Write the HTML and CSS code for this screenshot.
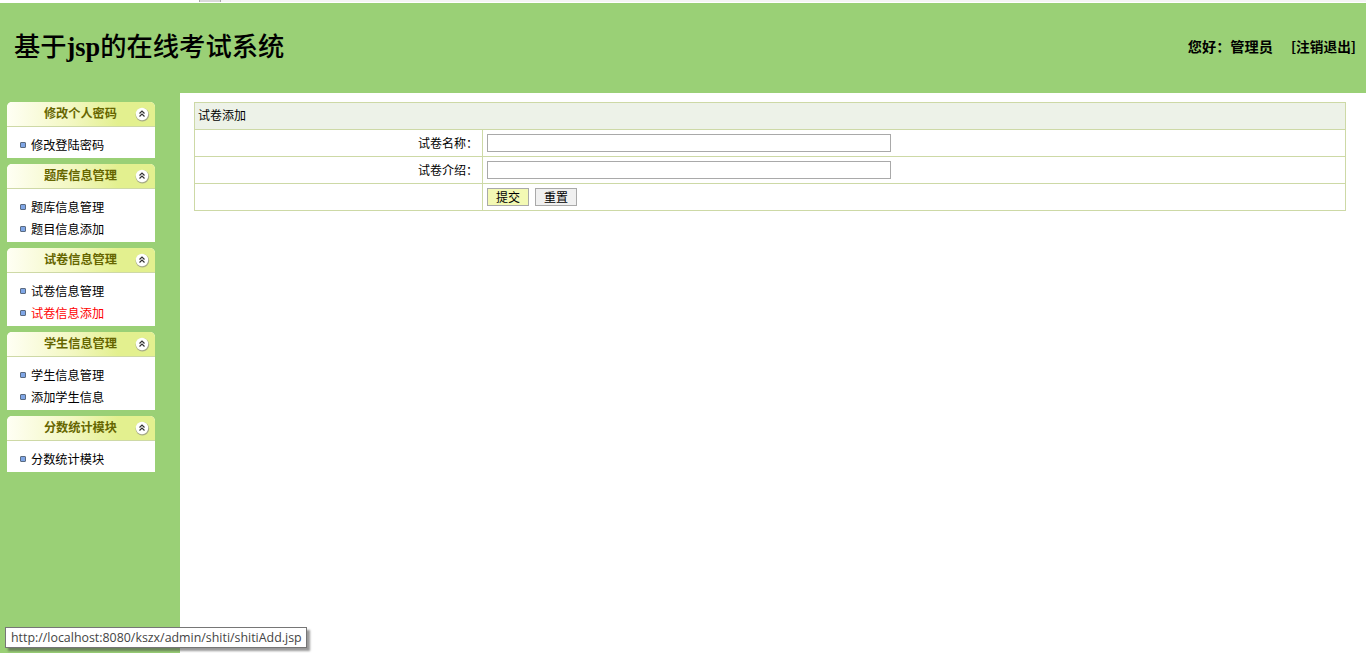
FILE: index.html
```html
<!DOCTYPE html>
<html lang="zh-CN">
<head>
<meta charset="utf-8">
<title>基于jsp的在线考试系统</title>
<link rel="stylesheet" href="styles.css">
</head>
<body>
<div class="strip"><span class="strip-a"></span><span class="strip-b"></span><span class="strip-c"></span></div>
<header class="header">
  <h1 class="title">基于<b class="title-latin">jsp</b>的在线考试系统</h1>
  <div class="user"><span>您好：管理员</span><a class="logout" href="#">[注销退出]</a></div>
</header>
<div class="main">
  <aside class="side">
    <section class="panel">
      <div class="head"><span class="head-text">修改个人密码</span><svg class="toggle" viewBox="0 0 16 16"><circle class="toggle-shadow" cx="8.4" cy="8.8" r="6.8"/><circle class="toggle-face" cx="8" cy="8" r="6.2"/><path class="toggle-arrow" d="M5.5 7.5 8 5l2.5 2.5M5.5 10.5 8 8l2.5 2.5"/></svg></div>
      <ul class="items"><li class="item"><i class="dot"></i>修改登陆密码</li></ul>
    </section>
    <section class="panel">
      <div class="head"><span class="head-text">题库信息管理</span><svg class="toggle" viewBox="0 0 16 16"><circle class="toggle-shadow" cx="8.4" cy="8.8" r="6.8"/><circle class="toggle-face" cx="8" cy="8" r="6.2"/><path class="toggle-arrow" d="M5.5 7.5 8 5l2.5 2.5M5.5 10.5 8 8l2.5 2.5"/></svg></div>
      <ul class="items"><li class="item"><i class="dot"></i>题库信息管理</li><li class="item"><i class="dot"></i>题目信息添加</li></ul>
    </section>
    <section class="panel">
      <div class="head"><span class="head-text">试卷信息管理</span><svg class="toggle" viewBox="0 0 16 16"><circle class="toggle-shadow" cx="8.4" cy="8.8" r="6.8"/><circle class="toggle-face" cx="8" cy="8" r="6.2"/><path class="toggle-arrow" d="M5.5 7.5 8 5l2.5 2.5M5.5 10.5 8 8l2.5 2.5"/></svg></div>
      <ul class="items"><li class="item"><i class="dot"></i>试卷信息管理</li><li class="item active"><i class="dot"></i>试卷信息添加</li></ul>
    </section>
    <section class="panel">
      <div class="head"><span class="head-text">学生信息管理</span><svg class="toggle" viewBox="0 0 16 16"><circle class="toggle-shadow" cx="8.4" cy="8.8" r="6.8"/><circle class="toggle-face" cx="8" cy="8" r="6.2"/><path class="toggle-arrow" d="M5.5 7.5 8 5l2.5 2.5M5.5 10.5 8 8l2.5 2.5"/></svg></div>
      <ul class="items"><li class="item"><i class="dot"></i>学生信息管理</li><li class="item"><i class="dot"></i>添加学生信息</li></ul>
    </section>
    <section class="panel">
      <div class="head"><span class="head-text">分数统计模块</span><svg class="toggle" viewBox="0 0 16 16"><circle class="toggle-shadow" cx="8.4" cy="8.8" r="6.8"/><circle class="toggle-face" cx="8" cy="8" r="6.2"/><path class="toggle-arrow" d="M5.5 7.5 8 5l2.5 2.5M5.5 10.5 8 8l2.5 2.5"/></svg></div>
      <ul class="items"><li class="item"><i class="dot"></i>分数统计模块</li></ul>
    </section>
  </aside>
  <main class="content">
    <table class="form-table">
      <colgroup><col class="col-label"><col></colgroup>
      <tr class="row-title"><td colspan="2">试卷添加</td></tr>
      <tr><td class="label">试卷名称：</td><td class="field"><input class="text" type="text"></td></tr>
      <tr><td class="label">试卷介绍：</td><td class="field"><input class="text" type="text"></td></tr>
      <tr><td class="label"></td><td class="field"><button class="btn btn-submit" type="button">提交</button><button class="btn btn-reset" type="button">重置</button></td></tr>
    </table>
  </main>
</div>
<div class="tooltip">http://localhost:8080/kszx/admin/shiti/shitiAdd.jsp</div>
</body>
</html>
```
FILE: styles.css
```css
* { box-sizing: border-box; }
html, body { height: 100%; }
body {
  margin: 0;
  display: flex;
  flex-direction: column;
  overflow: hidden;
  background: #fff;
  color: #000;
  font: 12px/1.2 "Noto Sans CJK SC", "Liberation Sans", sans-serif;
}
.strip { display: flex; height: 3px; flex: none; background: #fff; }
.strip-a { width: 199px; }
.strip-b { width: 22px; height: 2px; background: #d9d9d9; border: solid #aaa; border-width: 0 1px; }
.strip-c { flex: 1; height: 2px; background: #f4f4f4; }
.header {
  height: 90px;
  flex: none;
  background: #9ad076;
  display: flex;
  align-items: center;
  justify-content: space-between;
  padding: 0 10px 0 14px;
}
.title {
  margin: 0;
  font: 500 26.3px/1.2 "Liberation Serif", "Noto Sans CJK SC", serif;
}
.title-latin { font-weight: 700; }
.user { display: flex; gap: 18px; margin-bottom: 2px; font-size: 14.2px; font-weight: 700; }
.logout { color: #000; text-decoration: none; font-size: 13.7px; }
.main { flex: 1; display: flex; min-height: 0; }
.side {
  width: 180px;
  flex: none;
  background: #9ad076;
  padding: 9px 25px 0 7px;
  display: flex;
  flex-direction: column;
  gap: 6px;
}
.panel { background: #fff; border-radius: 5px 5px 0 0; overflow: hidden; }
.head {
  height: 25px;
  display: flex;
  align-items: center;
  border-bottom: 1px solid #ced9a6;
  background: linear-gradient(90deg, #fffff4 0%, #f2f7c0 45%, #e3f08f 75%, #e3f08f 100%);
}
.head-text {
  width: 110px;
  margin-bottom: 2px;
  text-align: right;
  color: #666600;
  font-weight: 700;
  font-size: 12.2px;
  white-space: nowrap;
}
.toggle { width: 16px; height: 16px; margin: 0 0 0 17px; flex: none; }
.toggle-shadow { fill: #8f8f86; opacity: .7; }
.toggle-face { fill: #fff; }
.toggle-arrow { fill: none; stroke: #333; stroke-width: 1.2; }
.items { list-style: none; margin: 0; padding: 7px 0 2px; }
.item { height: 22px; display: flex; align-items: center; padding-left: 13px; font-size: 12.2px; white-space: nowrap; }
.item.active { color: #f00; }
.dot {
  width: 6px;
  height: 6px;
  margin-right: 5px;
  background: #7fa6e6;
  border: 1px solid #5b6b80;
  border-radius: 1px;
  flex: none;
}
.content { flex: 1; padding: 9px 20px 0 14px; min-width: 0; }
.form-table { width: 100%; border-collapse: collapse; table-layout: fixed; }
.col-label { width: 288px; }
.form-table td { border: 1px solid #cdd9a6; height: 27px; padding: 0 4px; }
.row-title td { background: #edf2e8; padding: 0 4px 2px 3px; }
.label { text-align: right; }
.text { display: block; width: 404px; height: 18px; border: 1px solid #a9a9a9; padding: 0 2px; background: #fff; }
.btn {
  display: inline-block;
  height: 18px;
  width: 42px;
  padding: 0;
  font: inherit;
  color: #000;
  border: 1px solid #a9a9a9;
  vertical-align: top;
}
.btn-submit { background: #f3f9b4; margin-right: 6px; }
.btn-reset { background: #f0f0f0; }
.tooltip {
  position: absolute;
  left: 5px;
  top: 627px;
  width: 302px;
  height: 21px;
  padding-left: 5px;
  background: #fff;
  border: 1px solid #767676;
  box-shadow: 3px 3px 2px rgba(70, 70, 70, .55);
  color: #444;
  font: 12.4px/19px "Open Sans", "Noto Sans", sans-serif;
  white-space: nowrap;
}
```
